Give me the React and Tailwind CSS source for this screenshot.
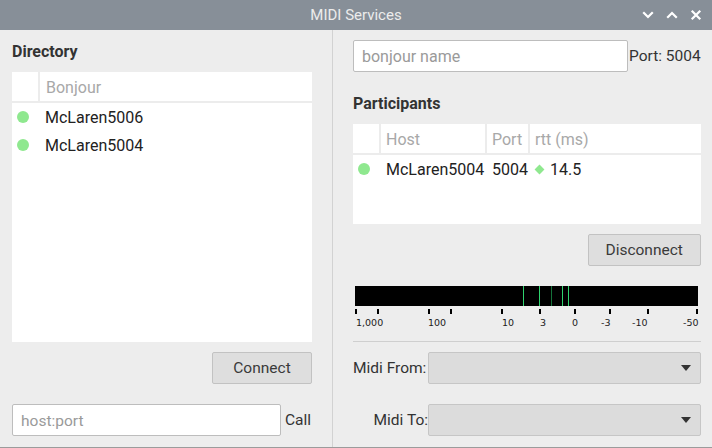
import React from 'react';

// MIDI Services window – directory / participants / latency meter

const font = { fontFamily: 'Roboto, "Noto Sans", sans-serif' };

const Dot = () => <span className="block w-3 h-3 rounded-full bg-[#8fe88f]" />;

const TitleIcon = ({ d }) => (
  <svg width="12" height="12" viewBox="0 0 12 12" fill="none" stroke="#ffffff" strokeWidth="2.2" strokeLinecap="square">
    <path d={d} />
  </svg>
);

const Button = ({ children, className = '' }) => (
  <button className={`h-[32px] pt-[2px] bg-[#dedede] border border-[#c2c2c2] rounded-[2px] text-[15.5px] text-[#3a3a3a] ${className}`}>
    {children}
  </button>
);

const Select = () => (
  <div className="flex-1 h-[32px] bg-[#dcdcdc] border border-[#c6c6c6] rounded-[2px] flex items-center justify-end pr-[9px]">
    <svg width="10" height="6" viewBox="0 0 10 6"><path d="M0 0h10L5 6z" fill="#333" /></svg>
  </div>
);

const ticks = [0, 22, 73, 95, 146, 184, 219, 254, 292, 341];
const labels = [
  { x: 1, t: '1,000' },
  { x: 73, t: '100' },
  { x: 147, t: '10' },
  { x: 185, t: '3' },
  { x: 217, t: '0' },
  { x: 246, t: '-3' },
  { x: 277, t: '-10' },
  { x: 328, t: '-50' },
];
const hits = [
  { x: 168, c: '#2fd36e' },
  { x: 184, c: '#2fd36e' },
  { x: 196, c: '#15723a' },
  { x: 207, c: '#2fd36e' },
  { x: 213, c: '#2fd36e' },
];

const Meter = () => (
  <div className="relative w-[343px] h-[42px] ml-[2px]">
    <div className="absolute left-0 top-0 w-[343px] h-[20px] bg-black">
      {hits.map((h, i) => (
        <div key={i} className="absolute top-0 h-[20px] w-px" style={{ left: h.x, background: h.c }} />
      ))}
    </div>
    {ticks.map((x, i) => (
      <div key={i} className="absolute top-[23px] w-[2px] h-[5px] bg-black" style={{ left: x }} />
    ))}
    {labels.map((l, i) => (
      <span
        key={i}
        className="absolute top-[31px] text-[9.5px] leading-[12px] text-[#222]"
        style={{ left: l.x, fontFamily: '"DejaVu Sans", sans-serif' }}
      >
        {l.t}
      </span>
    ))}
  </div>
);

export default function App() {
  return (
    <div className="w-[712px] h-[448px] flex flex-col bg-[#ededed] text-[#222] border-b border-[#9b9b9b]" style={font}>
      {/* Title bar */}
      <div className="relative h-[30px] shrink-0 bg-[#878f98] flex items-center justify-center">
        <span className="text-[15px] text-[#ececec]">MIDI Services</span>
        <div className="absolute right-[10px] top-0 h-[30px] flex items-center gap-[12px]">
          <TitleIcon d="M2 4l4 4 4-4" />
          <TitleIcon d="M2 8l4-4 4 4" />
          <TitleIcon d="M2.5 2.5l7 7M9.5 2.5l-7 7" />
        </div>
      </div>

      <div className="flex-1 flex min-h-0">
        {/* Left: directory */}
        <div className="w-[333px] shrink-0 border-r border-[#d2d2d2] pl-3 pr-5 flex flex-col">
          <div className="h-[42px] pt-[12px] text-[16px] font-bold text-[#333] leading-[20px]">Directory</div>
          <div className="h-[270px] bg-white flex flex-col">
            <div className="h-[31px] flex border-b-2 border-[#ececec] text-[16px] text-[#a8a8a8]">
              <div className="w-[28px] border-r-2 border-[#ececec]" />
              <div className="pl-[6px] pt-[2px] flex items-center">Bonjour</div>
            </div>
            {['McLaren5006', 'McLaren5004'].map((n) => (
              <div key={n} className="h-[28px] flex items-center text-[16px]">
                <div className="w-[33px] pl-[5px]"><Dot /></div>
                <span className="pt-[2px]">{n}</span>
              </div>
            ))}
          </div>
          <div className="mt-[10px] flex justify-end">
            <Button className="w-[100px]">Connect</Button>
          </div>
          <div className="mt-[20px] flex items-center">
            <input
              placeholder="host:port"
              className="w-[269px] h-[32px] bg-white border border-[#bdbdbd] rounded-[2px] px-[8px] pt-[2px] text-[15.5px] placeholder:text-[#9a9a9a] outline-none"
            />
            <span className="ml-[4px] pt-[2px] text-[15.5px] text-[#333]">Call</span>
          </div>
        </div>

        {/* Right: session */}
        <div className="flex-1 pl-5 pr-3 flex flex-col">
          <div className="mt-[10px] flex items-center">
            <input
              placeholder="bonjour name"
              className="w-[275px] h-[32px] bg-white border border-[#bdbdbd] rounded-[2px] px-[8px] pt-[1px] text-[16px] placeholder:text-[#9a9a9a] outline-none"
            />
            <span className="ml-[1px] pt-[1px] text-[15.5px] text-[#333] whitespace-nowrap">Port: 5004</span>
          </div>
          <div className="h-[52px] pt-[22px] text-[16px] font-bold text-[#333] leading-[20px]">Participants</div>
          <div className="h-[100px] bg-white flex flex-col">
            <div className="h-[31px] flex border-b-2 border-[#ececec] text-[16px] text-[#a8a8a8]">
              <div className="w-[28px] border-r-2 border-[#ececec]" />
              <div className="w-[106px] border-r-2 border-[#ececec] pl-[5px] pt-[2px] flex items-center">Host</div>
              <div className="w-[43px] border-r-2 border-[#ececec] pl-[5px] pt-[2px] flex items-center">Port</div>
              <div className="pl-[5px] pt-[2px] flex items-center">rtt (ms)</div>
            </div>
            <div className="h-[28px] flex items-center text-[16px]">
              <div className="w-[33px] pl-[5px]"><Dot /></div>
              <span className="w-[106px] pt-[2px] whitespace-nowrap">McLaren5004</span>
              <span className="w-[44px] pt-[2px]">5004</span>
              <span className="w-[14px] flex items-center">
                <span className="block w-[7px] h-[7px] rotate-45 bg-[#8fe88f]" />
              </span>
              <span className="pt-[2px]">14.5</span>
            </div>
          </div>
          <div className="mt-[10px] flex justify-end">
            <Button className="w-[113px]">Disconnect</Button>
          </div>
          <div className="mt-[20px]">
            <Meter />
          </div>
          <div className="mt-[13px] border-t border-[#cfcfcf]" />
          <div className="mt-[10px] flex items-center">
            <span className="w-[75px] pt-[2px] text-[15.5px] text-[#333] whitespace-nowrap">Midi From:</span>
            <Select />
          </div>
          <div className="mt-[20px] flex items-center">
            <span className="w-[75px] pt-[2px] text-right text-[15.5px] text-[#333] whitespace-nowrap">Midi To:</span>
            <Select />
          </div>
        </div>
      </div>
    </div>
  );
}
